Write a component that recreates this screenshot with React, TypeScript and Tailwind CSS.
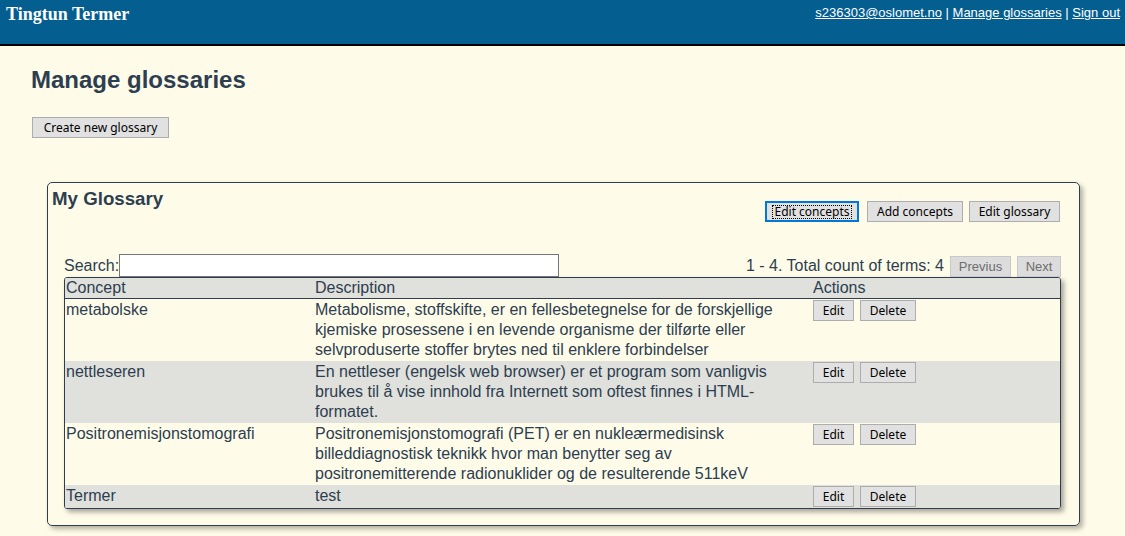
import React from "react";

const rows = [
  {
    concept: "metabolske",
    description:
      "Metabolisme, stoffskifte, er en fellesbetegnelse for de forskjellige kjemiske prosessene i en levende organisme der tilførte eller selvproduserte stoffer brytes ned til enklere forbindelser",
  },
  {
    concept: "nettleseren",
    description:
      "En nettleser (engelsk web browser) er et program som vanligvis brukes til å vise innhold fra Internett som oftest finnes i HTML-formatet.",
  },
  {
    concept: "Positronemisjonstomografi",
    description:
      "Positronemisjonstomografi (PET) er en nukleærmedisinsk billeddiagnostisk teknikk hvor man benytter seg av positronemitterende radionuklider og de resulterende 511keV",
  },
  { concept: "Termer", description: "test" },
];

const btnBase =
  "h-[21px] bg-[#e1e1e1] text-black text-[12px] leading-none font-['Noto_Sans',sans-serif] flex items-center justify-center";
const btn = `${btnBase} border border-[#adadad]`;

export default function App() {
  return (
    <div className="min-h-screen bg-[#fffbe9] font-['Liberation_Sans',Arial,sans-serif] text-[#2c3e50]">
      <header className="h-[46px] bg-[#045e8f] border-b-2 border-black flex justify-between items-start pl-[6px] pr-[5px]">
        <div className="font-['Liberation_Serif',serif] font-bold text-[18px] leading-[21px] text-white pt-[4px]">
          Tingtun Termer
        </div>
        <nav className="text-[13px] leading-[15px] text-white pt-[5px]">
          <a href="#" className="underline">s236303@oslomet.no</a> |{" "}
          <a href="#" className="underline">Manage glossaries</a> |{" "}
          <a href="#" className="underline">Sign out</a>
        </nav>
      </header>

      <main className="px-[32px] pb-[12px]">
        <h1 className="pt-[20px] text-[24px] leading-[28px] font-bold -ml-px">Manage glossaries</h1>
        <button className={`${btn} mt-[23px] w-[137px]`}>Create new glossary</button>

        <section className="mt-[44px] ml-[15px] mr-[13px] border border-[#2c3e50] rounded-[5px] shadow-[3px_3px_5px_rgba(0,0,0,0.3)] pb-[16px]">
          <div className="flex justify-between items-start">
            <h2 className="pl-[4px] pt-[5px] text-[18.7px] leading-[21px] font-bold">My Glossary</h2>
            <div className="flex mt-[18px] mr-[19px]">
              <button className={`${btnBase} w-[94px] border-2 border-[#0078d7]`}>
                <span className="outline-1 outline-dotted outline-black px-px">Edit concepts</span>
              </button>
              <button className={`${btn} ml-[8px] w-[96px]`}>Add concepts</button>
              <button className={`${btn} ml-[6px] w-[91px]`}>Edit glossary</button>
            </div>
          </div>

          <div className="mt-[32px] ml-[16px] mr-[18px] flex items-end justify-between h-[23px]">
            <div className="flex items-end">
              <span className="text-[16px] leading-[23px]">Search:</span>
              <input className="w-[440px] h-[23px] border border-[#767676] bg-white" />
            </div>
            <div className="flex items-end">
              <span className="text-[16px] leading-[23px]">1 - 4. Total count of terms: 4</span>
              <button
                disabled
                className="ml-[6px] w-[61px] h-[21px] bg-[#dcdcdc] border border-[#c8c8c8] text-[#6d6d6d] text-[13px]"
              >
                Previus
              </button>
              <button
                disabled
                className="ml-[6px] w-[44px] h-[21px] bg-[#dcdcdc] border border-[#c8c8c8] text-[#6d6d6d] text-[13px]"
              >
                Next
              </button>
            </div>
          </div>

          <div className="ml-[16px] mr-[18px] border border-[#2c3e50] rounded-[3px] overflow-hidden shadow-[3px_3px_5px_rgba(0,0,0,0.35)]">
            <table className="w-full table-fixed border-collapse text-[16px] text-left">
              <colgroup>
                <col className="w-[249px]" />
                <col className="w-[498px]" />
                <col />
              </colgroup>
              <thead>
                <tr className="bg-[#e0e0dc] border-b border-[#2c3e50]">
                  <th className="font-normal px-px py-px leading-[18px]">Concept</th>
                  <th className="font-normal px-px py-px leading-[18px]">Description</th>
                  <th className="font-normal px-px py-px leading-[18px]">Actions</th>
                </tr>
              </thead>
              <tbody>
                {rows.map((r, i) => (
                  <tr key={r.concept} className={i % 2 === 1 ? "bg-[#e0e0dc]" : "bg-[#fffbe9]"}>
                    <td className="align-top px-px py-px leading-[20px]">{r.concept}</td>
                    <td className="align-top px-px py-px leading-[20px]">{r.description}</td>
                    <td className="align-top px-px py-px leading-[20px]">
                      <div className="flex gap-[6px]">
                        <button className={`${btn} w-[41px]`}>Edit</button>
                        <button className={`${btn} w-[56px]`}>Delete</button>
                      </div>
                    </td>
                  </tr>
                ))}
              </tbody>
            </table>
          </div>
        </section>
      </main>
    </div>
  );
}
